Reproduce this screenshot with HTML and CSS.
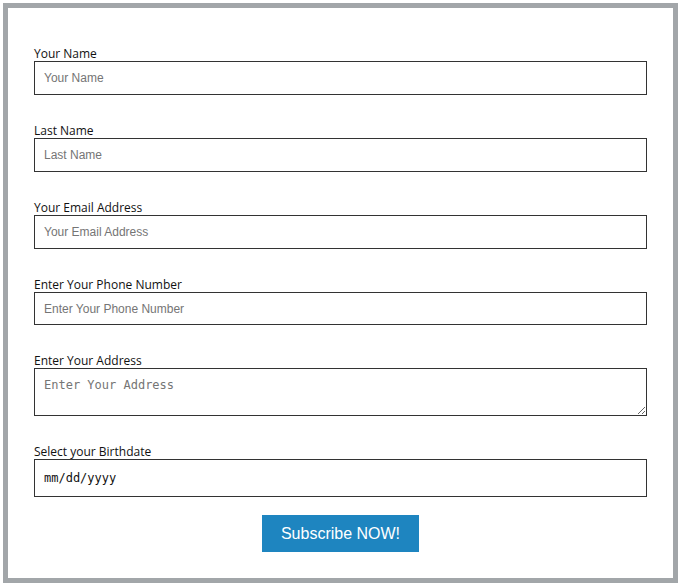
FILE: index.html
```html
<!DOCTYPE html>
<html lang="en">
<head>
<meta charset="utf-8">
<title>Subscribe</title>
<link rel="stylesheet" href="styles.css">
</head>
<body>
<div class="page">
  <form class="card">
    <div class="field">
      <label class="label" for="fname">Your Name</label>
      <input class="input" id="fname" type="text" placeholder="Your Name">
    </div>
    <div class="field">
      <label class="label" for="lname">Last Name</label>
      <input class="input" id="lname" type="text" placeholder="Last Name">
    </div>
    <div class="field">
      <label class="label" for="email">Your Email Address</label>
      <input class="input" id="email" type="email" placeholder="Your Email Address">
    </div>
    <div class="field">
      <label class="label" for="phone">Enter Your Phone Number</label>
      <input class="input input-phone" id="phone" type="tel" placeholder="Enter Your Phone Number">
    </div>
    <div class="field">
      <label class="label" for="addr">Enter Your Address</label>
      <textarea class="textarea" id="addr" placeholder="Enter Your Address"></textarea>
    </div>
    <div class="field field-last">
      <label class="label" for="bdate">Select your Birthdate</label>
      <input class="input input-date" id="bdate" type="text" placeholder="mm/dd/yyyy">
    </div>
    <div class="actions">
      <button class="btn" type="button">Subscribe NOW!</button>
    </div>
  </form>
</div>
</body>
</html>
```
FILE: styles.css
```css
* { box-sizing: border-box; }
html, body { margin: 0; padding: 0; background: #fff; }
.page { padding: 3px; }
.card {
  width: 675px;
  height: 580px;
  border: 5px solid #a2a6a9;
  padding: 36px 26px 26px 26px;
  display: flex;
  flex-direction: column;
}
.field { display: flex; flex-direction: column; margin-bottom: 26px; }
.field-last { margin-bottom: 18px; }
.label {
  font-family: "Open Sans", "Noto Sans", sans-serif;
  font-size: 12px;
  line-height: 15px;
  padding-top: 2px;
  color: #111;
  display: block;
}
.input, .textarea {
  display: block;
  width: 100%;
  margin: 0;
  border: 1px solid #333;
  border-radius: 0;
  outline: none;
  background: #fff;
  color: #111;
}
.input {
  height: 34px;
  padding: 0 9px;
  font-family: "Liberation Sans", Arial, sans-serif;
  font-size: 12px;
}
.input-phone { height: 33px; }
.input::placeholder, .textarea::placeholder { color: #757575; opacity: 1; }
.textarea {
  height: 48px;
  padding: 9px 9px 8px;
  font-family: "DejaVu Sans Mono", monospace;
  font-size: 12px;
  line-height: 14px;
  resize: both;
}
.input-date {
  height: 38px;
  font-family: "DejaVu Sans Mono", monospace;
  font-size: 12px;
  color: #111;
}
.input-date::placeholder { color: #111; }
.actions { display: flex; justify-content: center; }
.btn {
  width: 157px;
  height: 37px;
  border: 0;
  border-radius: 0;
  background: #1e85c0;
  color: #fff;
  font-family: "Liberation Sans", Arial, sans-serif;
  font-size: 16px;
  padding: 0;
  cursor: pointer;
}
```
